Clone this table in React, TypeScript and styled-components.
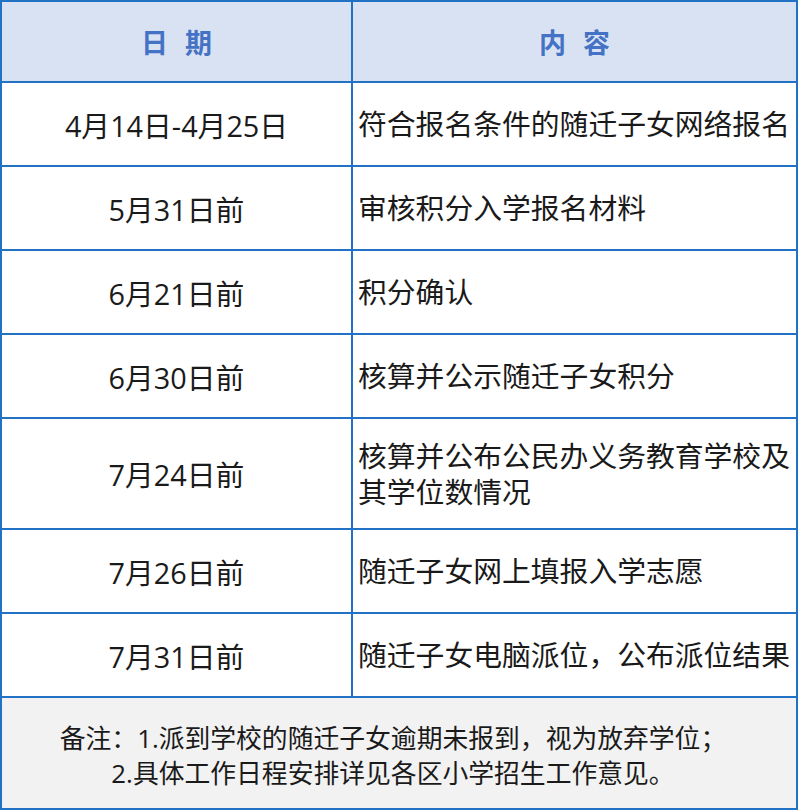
import React from "react";
import styled, { createGlobalStyle } from "styled-components";

const Global = createGlobalStyle`
  html, body { margin: 0; padding: 0; background: #ffffff; }
  body { font-family: "Open Sans", "Noto Sans CJK SC", sans-serif; }
`;

const BLUE = "#2172c4";

const Table = styled.div`
  width: 798px;
  box-sizing: border-box;
  border: 2px solid ${BLUE};
  display: grid;
  grid-template-columns: 351px 1fr;
  color: #1a1a1a;
  font-family: "Open Sans", "Noto Sans CJK SC", sans-serif;
`;

const HeadCell = styled.div<{ $last?: boolean }>`
  height: 79px;
  background: #d9e2f3;
  border-bottom: 2px solid ${BLUE};
  border-right: ${(p) => (p.$last ? "none" : `2px solid ${BLUE}`)};
  display: flex;
  align-items: center;
  justify-content: center;
  color: #4472c4;
  font-family: "Noto Sans CJK SC", sans-serif;
  font-weight: 700;
  font-size: 27px;
  letter-spacing: 17px;
  padding-left: 17px;
  box-sizing: content-box;
`;

const DateCell = styled.div<{ $h: number }>`
  height: ${(p) => p.$h}px;
  border-bottom: 2px solid ${BLUE};
  border-right: 2px solid ${BLUE};
  display: flex;
  align-items: center;
  justify-content: center;
  font-size: 28.8px;
  white-space: nowrap;
`;

const ContentCell = styled.div<{ $h: number }>`
  height: ${(p) => p.$h}px;
  border-bottom: 2px solid ${BLUE};
  display: flex;
  align-items: center;
  padding-left: 5px;
  font-size: 28.8px;
  white-space: nowrap;
`;

const Lines = styled.div`
  display: flex;
  flex-direction: column;
  gap: 0;
`;

const Line = styled.div`
  height: 36px;
  line-height: 36px;
  display: flex;
  align-items: center;
`;

const Footer = styled.div`
  grid-column: 1 / span 2;
  height: 110px;
  background: #f2f2f2;
  display: flex;
  flex-direction: column;
  align-items: center;
  justify-content: center;
  font-size: 25.8px;
  line-height: 35px;
  padding-top: 6px;
  padding-right: 12px;
  box-sizing: border-box;
  white-space: nowrap;
`;

const rows: { date: string; content: string[]; h: number }[] = [
  { date: "4月14日-4月25日", content: ["符合报名条件的随迁子女网络报名"], h: 82 },
  { date: "5月31日前", content: ["审核积分入学报名材料"], h: 82 },
  { date: "6月21日前", content: ["积分确认"], h: 82 },
  { date: "6月30日前", content: ["核算并公示随迁子女积分"], h: 82 },
  { date: "7月24日前", content: ["核算并公布公民办义务教育学校及", "其学位数情况"], h: 109 },
  { date: "7月26日前", content: ["随迁子女网上填报入学志愿"], h: 82 },
  { date: "7月31日前", content: ["随迁子女电脑派位，公布派位结果"], h: 82 },
];

export default function App() {
  return (
    <>
      <Global />
      <Table>
        <HeadCell>日期</HeadCell>
        <HeadCell $last>内容</HeadCell>
        {rows.map((r) => (
          <React.Fragment key={r.date}>
            <DateCell $h={r.h}>{r.date}</DateCell>
            <ContentCell $h={r.h}>
              <Lines>
                {r.content.map((c) => (
                  <Line key={c}>{c}</Line>
                ))}
              </Lines>
            </ContentCell>
          </React.Fragment>
        ))}
        <Footer>
          <span>备注：1.派到学校的随迁子女逾期未报到，视为放弃学位；</span>
          <span>2.具体工作日程安排详见各区小学招生工作意见。</span>
        </Footer>
      </Table>
    </>
  );
}
